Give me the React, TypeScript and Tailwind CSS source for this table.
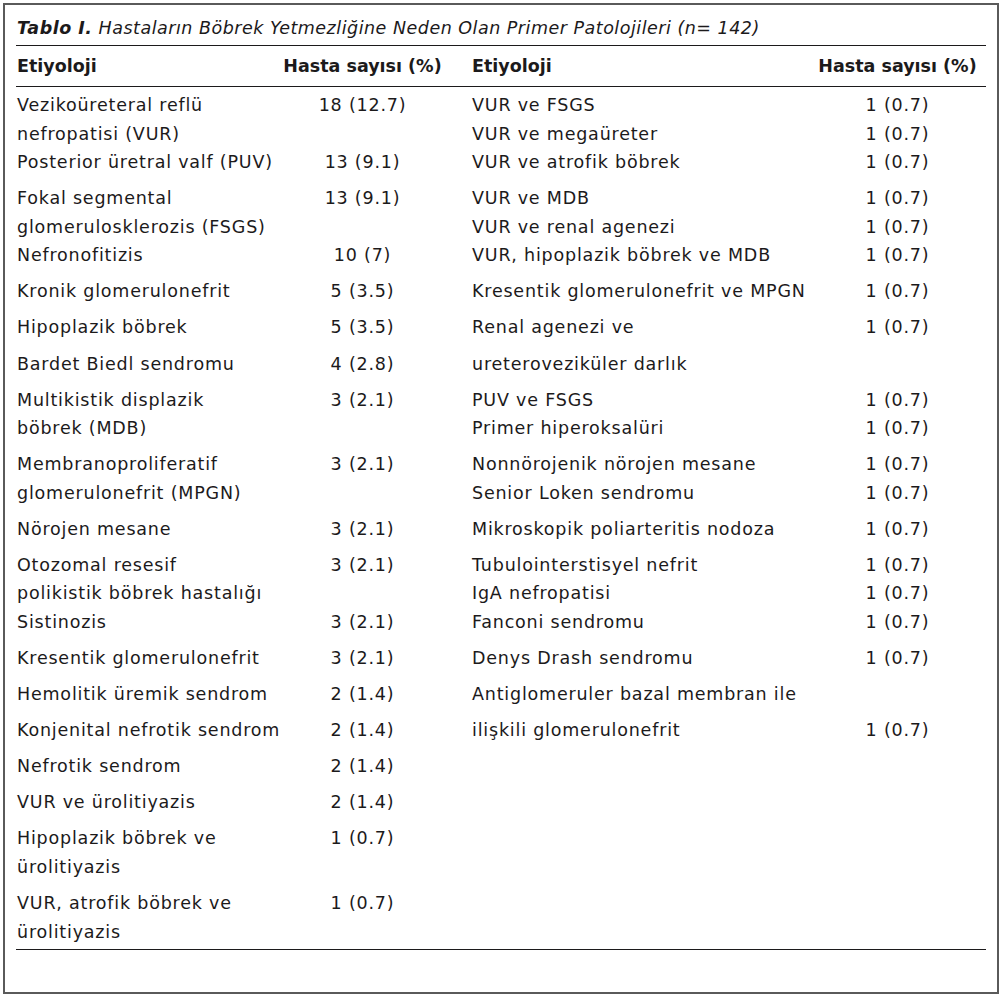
import React from "react";

type Line = [string, string, string, string];

const groups: Line[][] = [
  [
    ["Vezikoüreteral reflü", "18 (12.7)", "VUR ve FSGS", "1 (0.7)"],
    ["nefropatisi (VUR)", "", "VUR ve megaüreter", "1 (0.7)"],
    ["Posterior üretral valf (PUV)", "13 (9.1)", "VUR ve atrofik böbrek", "1 (0.7)"],
  ],
  [
    ["Fokal segmental", "13 (9.1)", "VUR ve MDB", "1 (0.7)"],
    ["glomerulosklerozis (FSGS)", "", "VUR ve renal agenezi", "1 (0.7)"],
    ["Nefronofitizis", "10 (7)", "VUR, hipoplazik böbrek ve MDB", "1 (0.7)"],
  ],
  [["Kronik glomerulonefrit", "5 (3.5)", "Kresentik glomerulonefrit ve MPGN", "1 (0.7)"]],
  [["Hipoplazik böbrek", "5 (3.5)", "Renal agenezi ve", "1 (0.7)"]],
  [["Bardet Biedl sendromu", "4 (2.8)", "ureteroveziküler darlık", ""]],
  [
    ["Multikistik displazik", "3 (2.1)", "PUV ve FSGS", "1 (0.7)"],
    ["böbrek (MDB)", "", "Primer hiperoksalüri", "1 (0.7)"],
  ],
  [
    ["Membranoproliferatif", "3 (2.1)", "Nonnörojenik nörojen mesane", "1 (0.7)"],
    ["glomerulonefrit (MPGN)", "", "Senior Loken sendromu", "1 (0.7)"],
  ],
  [["Nörojen mesane", "3 (2.1)", "Mikroskopik poliarteritis nodoza", "1 (0.7)"]],
  [
    ["Otozomal resesif", "3 (2.1)", "Tubulointerstisyel nefrit", "1 (0.7)"],
    ["polikistik böbrek hastalığı", "", "IgA nefropatisi", "1 (0.7)"],
    ["Sistinozis", "3 (2.1)", "Fanconi sendromu", "1 (0.7)"],
  ],
  [["Kresentik glomerulonefrit", "3 (2.1)", "Denys Drash sendromu", "1 (0.7)"]],
  [["Hemolitik üremik sendrom", "2 (1.4)", "Antiglomeruler bazal membran ile", ""]],
  [["Konjenital nefrotik sendrom", "2 (1.4)", "ilişkili glomerulonefrit", "1 (0.7)"]],
  [["Nefrotik sendrom", "2 (1.4)", "", ""]],
  [["VUR ve ürolitiyazis", "2 (1.4)", "", ""]],
  [
    ["Hipoplazik böbrek ve", "1 (0.7)", "", ""],
    ["ürolitiyazis", "", "", ""],
  ],
  [
    ["VUR, atrofik böbrek ve", "1 (0.7)", "", ""],
    ["ürolitiyazis", "", "", ""],
  ],
];

const cols = "grid grid-cols-[267px_159px_30px_346px_159px]";

export default function App() {
  return (
    <div
      className="w-[1004px] h-[997px] bg-white pt-[3px] pl-[3px] text-[#1c1a1b]"
      style={{ fontFamily: '"DejaVu Sans", "Noto Sans", sans-serif' }}
    >
      <div className="w-[996px] h-[991px] border-2 border-[#5a5a5a] px-[11px]">
        <div className="h-[41px] border-b-[1.5px] border-[#1c1a1b] flex items-center pl-px pt-[6px] text-[17.5px] italic whitespace-nowrap tracking-[0.5px]">
          <span className="font-bold">Tablo I.</span>
          <span>&nbsp;Hastaların Böbrek Yetmezliğine Neden Olan Primer Patolojileri (n= 142)</span>
        </div>
        <div className={`${cols} h-[41px] items-center border-b-[1.5px] border-[#1c1a1b] text-[17.5px] font-bold whitespace-nowrap`}>
          <div className="pl-px">Etiyoloji</div>
          <div className="text-center">Hasta sayısı (%)</div>
          <div />
          <div>Etiyoloji</div>
          <div className="text-center">Hasta sayısı (%)</div>
        </div>
        <div className="border-b-[1.5px] border-[#1c1a1b] pt-[4px] pb-[3px] text-[17.5px] tracking-[0.8px] whitespace-nowrap">
          {groups.map((g, gi) => (
            <div key={gi} className={gi === 0 ? "" : "mt-[7.6px]"}>
              {g.map((l, li) => (
                <div key={li} className={`${cols} h-[28.5px] items-center`}>
                  <div className="pl-px">{l[0]}</div>
                  <div className="text-center">{l[1]}</div>
                  <div />
                  <div>{l[2]}</div>
                  <div className="text-center">{l[3]}</div>
                </div>
              ))}
            </div>
          ))}
        </div>
      </div>
    </div>
  );
}
